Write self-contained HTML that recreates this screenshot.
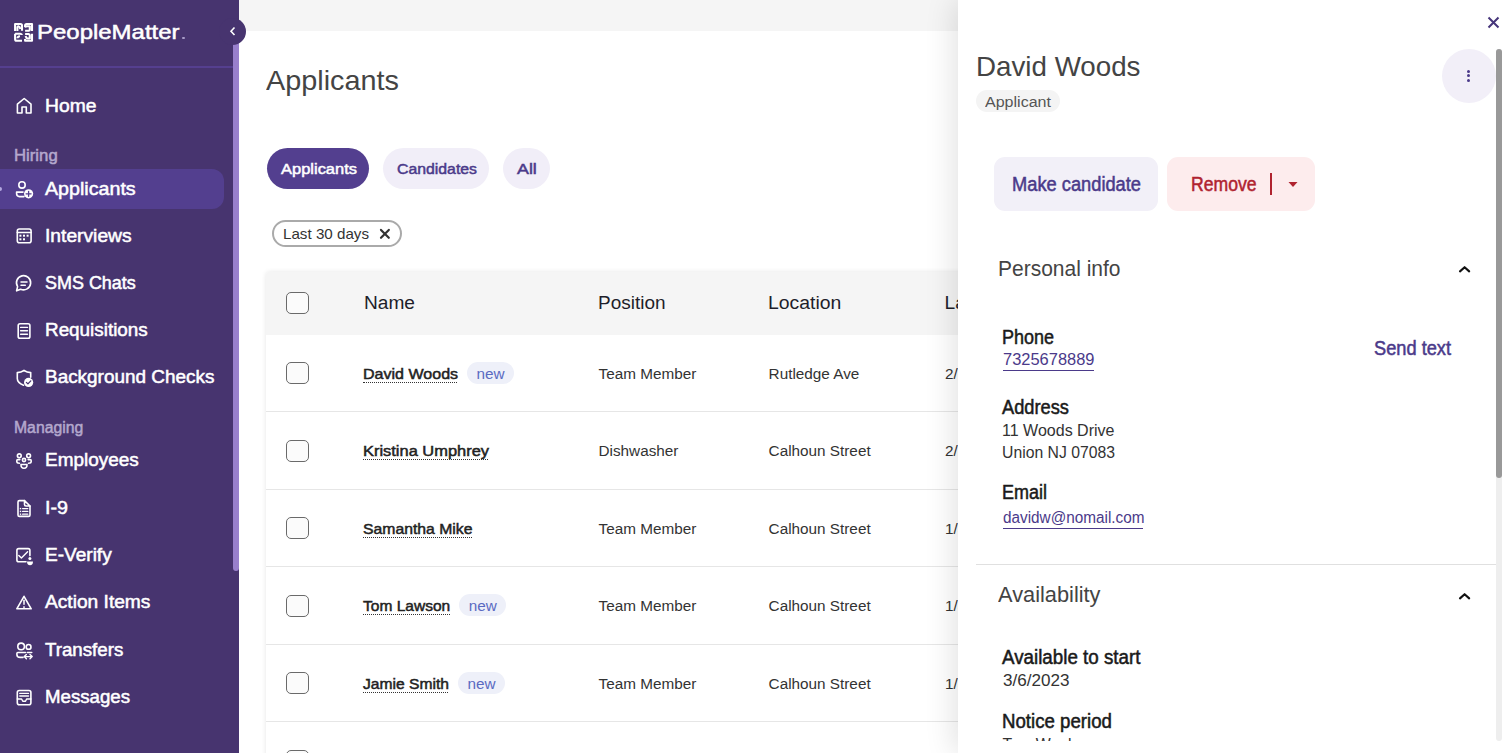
<!DOCTYPE html>
<html><head><meta charset="utf-8">
<style>
*{box-sizing:border-box;margin:0;padding:0}
html,body{width:1510px;height:753px;overflow:hidden;background:#fff;font-family:"Liberation Sans",sans-serif;position:relative}
.a{position:absolute;white-space:nowrap;line-height:1}
.md{-webkit-text-stroke:0.5px currentColor}
svg{position:absolute;left:0;top:0;overflow:visible}
</style></head><body>
<div style="position:absolute;left:239px;top:0px;width:719px;height:31px;background:#f5f5f5;"></div>
<div class="a" style="left:265.5px;top:66.80px;font-size:28px;font-weight:400;color:#444;transform:scaleX(1.0295);transform-origin:0 23.70px;">Applicants</div>
<div style="position:absolute;left:267px;top:148px;width:102px;height:41px;background:#533f8f;border-radius:21px"></div>
<div class="a md" style="left:281px;top:161.25px;font-size:15.3px;font-weight:400;color:#fff;transform:scaleX(1.0768);transform-origin:0 12.95px;">Applicants</div>
<div style="position:absolute;left:383px;top:148px;width:106px;height:41px;background:#f1eef8;border-radius:21px"></div>
<div class="a md" style="left:396.5px;top:161.25px;font-size:15.3px;font-weight:400;color:#4b3a8a;transform:scaleX(1.0337);transform-origin:0 12.95px;">Candidates</div>
<div style="position:absolute;left:503px;top:148px;width:47px;height:41px;background:#f1eef8;border-radius:21px"></div>
<div class="a md" style="left:516.5px;top:161.25px;font-size:15.3px;font-weight:400;color:#4b3a8a;transform:scaleX(1.1647);transform-origin:0 12.95px;">All</div>
<div style="position:absolute;left:272px;top:220px;width:129.5px;height:26.7px;background:#fff;border:2px solid #aaa;border-radius:14px"></div>
<div class="a" style="left:283px;top:226.77px;font-size:14.8px;font-weight:400;color:#333;transform:scaleX(1.0250);transform-origin:0 12.53px;">Last 30 days</div>
<svg width="1510" height="753"><path d="M381,229.9 L388.8,237.8 M388.8,229.9 L381,237.8" stroke="#333" stroke-width="2.2" stroke-linecap="round"/></svg>
<div style="position:absolute;left:266px;top:272px;width:800px;height:500px;background:#fff;box-shadow:0 0 5px rgba(0,0,0,0.10);border-radius:3px 0 0 0"></div>
<div style="position:absolute;left:266px;top:272px;width:800px;height:62.5px;background:#f5f5f5;border-radius:3px 0 0 0"></div>
<div style="position:absolute;left:286.3px;top:292px;width:22.6px;height:22px;background:#fbfbfb;border:1.6px solid #6a6a6a;border-radius:5px"></div>
<div class="a" style="left:363.5px;top:293.25px;font-size:19.2px;font-weight:400;color:#1e1e2a;transform:scaleX(0.9963);transform-origin:0 16.25px;">Name</div>
<div class="a" style="left:598px;top:293.25px;font-size:19.2px;font-weight:400;color:#1e1e2a;transform:scaleX(0.9888);transform-origin:0 16.25px;">Position</div>
<div class="a" style="left:768px;top:293.25px;font-size:19.2px;font-weight:400;color:#1e1e2a;transform:scaleX(1.0104);transform-origin:0 16.25px;">Location</div>
<div class="a" style="left:944.5px;top:293.25px;font-size:19.2px;font-weight:400;color:#1e1e2a;">Last activity</div>
<div style="position:absolute;left:286.3px;top:362px;width:22.6px;height:22px;background:#fbfbfb;border:1.6px solid #6a6a6a;border-radius:5px"></div>
<div class="a md" style="left:363.4px;top:365.85px;font-size:15.3px;font-weight:400;color:#222;transform:scaleX(1.0485);transform-origin:0 12.95px;">David Woods</div>
<div style="position:absolute;left:363.4px;top:381.8px;width:94.1px;height:1px;background:transparent;border-top:1px dotted #333"></div>
<div style="position:absolute;left:467.0px;top:361.8px;width:47px;height:22px;background:#eef0f9;border-radius:11px"></div>
<div class="a" style="left:476.6px;top:365.85px;font-size:15.3px;font-weight:400;color:#5a6ac2;">new</div>
<div class="a" style="left:598.5px;top:365.85px;font-size:15.3px;font-weight:400;color:#333;">Team Member</div>
<div class="a" style="left:768.6px;top:365.85px;font-size:15.3px;font-weight:400;color:#333;">Rutledge Ave</div>
<div class="a" style="left:945px;top:365.85px;font-size:15.3px;font-weight:400;color:#333;">2/28/2023</div>
<div style="position:absolute;left:266px;top:411px;width:800px;height:1px;background:#e6e6e6;"></div>
<div style="position:absolute;left:286.3px;top:440px;width:22.6px;height:22px;background:#fbfbfb;border:1.6px solid #6a6a6a;border-radius:5px"></div>
<div class="a md" style="left:363.4px;top:443.30px;font-size:15.3px;font-weight:400;color:#222;transform:scaleX(1.0741);transform-origin:0 12.95px;">Kristina Umphrey</div>
<div style="position:absolute;left:363.4px;top:459.25px;width:125px;height:1px;background:transparent;border-top:1px dotted #333"></div>
<div class="a" style="left:598.5px;top:443.30px;font-size:15.3px;font-weight:400;color:#333;">Dishwasher</div>
<div class="a" style="left:768.6px;top:443.30px;font-size:15.3px;font-weight:400;color:#333;">Calhoun Street</div>
<div class="a" style="left:945px;top:443.30px;font-size:15.3px;font-weight:400;color:#333;">2/27/2023</div>
<div style="position:absolute;left:266px;top:489px;width:800px;height:1px;background:#e6e6e6;"></div>
<div style="position:absolute;left:286.3px;top:517px;width:22.6px;height:22px;background:#fbfbfb;border:1.6px solid #6a6a6a;border-radius:5px"></div>
<div class="a md" style="left:363.4px;top:520.75px;font-size:15.3px;font-weight:400;color:#222;transform:scaleX(1.0303);transform-origin:0 12.95px;">Samantha Mike</div>
<div style="position:absolute;left:363.4px;top:536.7px;width:108.5px;height:1px;background:transparent;border-top:1px dotted #333"></div>
<div class="a" style="left:598.5px;top:520.75px;font-size:15.3px;font-weight:400;color:#333;">Team Member</div>
<div class="a" style="left:768.6px;top:520.75px;font-size:15.3px;font-weight:400;color:#333;">Calhoun Street</div>
<div class="a" style="left:945px;top:520.75px;font-size:15.3px;font-weight:400;color:#333;">1/30/2023</div>
<div style="position:absolute;left:266px;top:566px;width:800px;height:1px;background:#e6e6e6;"></div>
<div style="position:absolute;left:286.3px;top:595px;width:22.6px;height:22px;background:#fbfbfb;border:1.6px solid #6a6a6a;border-radius:5px"></div>
<div class="a md" style="left:363.4px;top:598.20px;font-size:15.3px;font-weight:400;color:#222;transform:scaleX(1.0154);transform-origin:0 12.95px;">Tom Lawson</div>
<div style="position:absolute;left:363.4px;top:614.1500000000001px;width:86.2px;height:1px;background:transparent;border-top:1px dotted #333"></div>
<div style="position:absolute;left:459.09999999999997px;top:594.1500000000001px;width:47px;height:22px;background:#eef0f9;border-radius:11px"></div>
<div class="a" style="left:468.7px;top:598.20px;font-size:15.3px;font-weight:400;color:#5a6ac2;">new</div>
<div class="a" style="left:598.5px;top:598.20px;font-size:15.3px;font-weight:400;color:#333;">Team Member</div>
<div class="a" style="left:768.6px;top:598.20px;font-size:15.3px;font-weight:400;color:#333;">Calhoun Street</div>
<div class="a" style="left:945px;top:598.20px;font-size:15.3px;font-weight:400;color:#333;">1/30/2023</div>
<div style="position:absolute;left:266px;top:644px;width:800px;height:1px;background:#e6e6e6;"></div>
<div style="position:absolute;left:286.3px;top:672px;width:22.6px;height:22px;background:#fbfbfb;border:1.6px solid #6a6a6a;border-radius:5px"></div>
<div class="a md" style="left:363.4px;top:675.65px;font-size:15.3px;font-weight:400;color:#222;transform:scaleX(1.0219);transform-origin:0 12.95px;">Jamie Smith</div>
<div style="position:absolute;left:363.4px;top:691.6px;width:85px;height:1px;background:transparent;border-top:1px dotted #333"></div>
<div style="position:absolute;left:457.9px;top:671.6px;width:47px;height:22px;background:#eef0f9;border-radius:11px"></div>
<div class="a" style="left:467.5px;top:675.65px;font-size:15.3px;font-weight:400;color:#5a6ac2;">new</div>
<div class="a" style="left:598.5px;top:675.65px;font-size:15.3px;font-weight:400;color:#333;">Team Member</div>
<div class="a" style="left:768.6px;top:675.65px;font-size:15.3px;font-weight:400;color:#333;">Calhoun Street</div>
<div class="a" style="left:945px;top:675.65px;font-size:15.3px;font-weight:400;color:#333;">1/30/2023</div>
<div style="position:absolute;left:266px;top:721px;width:800px;height:1px;background:#e6e6e6;"></div>
<div style="position:absolute;left:286.3px;top:750px;width:22.6px;height:22px;background:#fbfbfb;border:1.6px solid #6a6a6a;border-radius:5px"></div>
<div class="a md" style="left:363.4px;top:753.10px;font-size:15.3px;font-weight:400;color:#222;transform:scaleX(1.1115);transform-origin:0 12.95px;">Alex Brown</div>
<div style="position:absolute;left:363.4px;top:769.0500000000001px;width:85px;height:1px;background:transparent;border-top:1px dotted #333"></div>
<div class="a" style="left:598.5px;top:753.10px;font-size:15.3px;font-weight:400;color:#333;">Team Member</div>
<div class="a" style="left:768.6px;top:753.10px;font-size:15.3px;font-weight:400;color:#333;">Calhoun Street</div>
<div class="a" style="left:945px;top:753.10px;font-size:15.3px;font-weight:400;color:#333;">1/30/2023</div>
<div style="position:absolute;left:0px;top:0px;width:239px;height:753px;background:#47346f;"></div>
<div style="position:absolute;left:0px;top:66px;width:233px;height:2px;background:#553f8f;"></div>
<div style="position:absolute;left:233px;top:30px;width:6px;height:541px;background:#9980cc;border-radius:0 0 3px 3px"></div>
<div style="position:absolute;left:0px;top:169px;width:224px;height:40px;background:#533f8f;border-radius:0 12px 12px 0"></div>
<div class="a md" style="left:36.6px;top:21.42px;font-size:21px;font-weight:400;color:#fff;transform:scaleX(1.1409);transform-origin:0 17.78px;">PeopleMatter</div>
<div style="position:absolute;left:182.2px;top:36.6px;width:2.8px;height:2.8px;background:#a89cc8;border-radius:50%"></div>
<div class="a md" style="left:45.3px;top:96.56px;font-size:18px;font-weight:400;color:#fff;transform:scaleX(1.0705);transform-origin:0 15.24px;">Home</div>
<div class="a md" style="left:45.3px;top:179.56px;font-size:18px;font-weight:400;color:#fff;transform:scaleX(1.0919);transform-origin:0 15.24px;">Applicants</div>
<div class="a md" style="left:45.3px;top:226.56px;font-size:18px;font-weight:400;color:#fff;transform:scaleX(1.0687);transform-origin:0 15.24px;">Interviews</div>
<div class="a md" style="left:45.3px;top:273.76px;font-size:18px;font-weight:400;color:#fff;transform:scaleX(0.9975);transform-origin:0 15.24px;">SMS Chats</div>
<div class="a md" style="left:45.3px;top:321.26px;font-size:18px;font-weight:400;color:#fff;transform:scaleX(1.0483);transform-origin:0 15.24px;">Requisitions</div>
<div class="a md" style="left:45.3px;top:368.46px;font-size:18px;font-weight:400;color:#fff;transform:scaleX(1.0516);transform-origin:0 15.24px;">Background Checks</div>
<div class="a md" style="left:45.3px;top:451.26px;font-size:18px;font-weight:400;color:#fff;transform:scaleX(1.0523);transform-origin:0 15.24px;">Employees</div>
<div class="a md" style="left:45.3px;top:498.76px;font-size:18px;font-weight:400;color:#fff;transform:scaleX(1.0944);transform-origin:0 15.24px;">I-9</div>
<div class="a md" style="left:45.3px;top:546.06px;font-size:18px;font-weight:400;color:#fff;transform:scaleX(1.0582);transform-origin:0 15.24px;">E-Verify</div>
<div class="a md" style="left:45.3px;top:593.36px;font-size:18px;font-weight:400;color:#fff;transform:scaleX(1.0641);transform-origin:0 15.24px;">Action Items</div>
<div class="a md" style="left:45.3px;top:640.66px;font-size:18px;font-weight:400;color:#fff;transform:scaleX(1.0390);transform-origin:0 15.24px;">Transfers</div>
<div class="a md" style="left:45.3px;top:687.96px;font-size:18px;font-weight:400;color:#fff;transform:scaleX(1.0360);transform-origin:0 15.24px;">Messages</div>
<div class="a md" style="left:14.4px;top:147.83px;font-size:15.8px;font-weight:400;color:#b4a8cd;transform:scaleX(1.0590);transform-origin:0 13.37px;">Hiring</div>
<div class="a md" style="left:14px;top:420.03px;font-size:15.8px;font-weight:400;color:#b4a8cd;transform:scaleX(0.9973);transform-origin:0 13.37px;">Managing</div>
<svg width="1510" height="753" fill="none" stroke="#fff" stroke-width="1.6" stroke-linejoin="round" stroke-linecap="round">
<g stroke-width="2.1" stroke-linecap="butt" stroke-linejoin="round">
<path d="M15.1,31 V24 H20.5 Q22,24 22,25.5 V30.8"/>
<path d="M32,31 V24 H26.6 Q25.1,24 25.1,25.5 V27"/>
<path d="M15.1,33.8 V39.3 Q15.1,40.8 16.6,40.8 H22"/>
<path d="M32,33.8 V40.8 H25.1 V39"/>
<path d="M17.4,31 V27.3 Q17.4,26.2 18.5,26.2 Q20,26.5 20.3,29"/>
<path d="M25.1,30.7 H28.8 Q29.8,30.7 29.8,29.5 V26.3 H26.6 Q25.6,26.3 25.1,27.5"/>
<path d="M15.1,33.8 H20.2 Q21.8,34 21.9,35 M17.5,38.3 Q17.5,36.5 20,36.3"/>
<path d="M25.1,34 H28.6 Q29.8,34.1 29.8,35.5 V38.5 H27.6 Q26.2,38.3 25.6,36"/>
</g>
<path d="M17.4,113 V104.2 L24.2,98.5 L31,104.2 V113 H26.3 V107 H22 V113 Z"/>
<circle cx="22" cy="184.9" r="3.2"/>
<path d="M24,196.6 H19.5 Q16.6,196.6 16.6,193.6 V192.1 H23"/>
<circle cx="28.6" cy="193.8" r="4.6" fill="#fff" stroke="none"/>
<path d="M28.6,191.3 V196.3 M26.1,193.8 H31.1" stroke="#533f8f" stroke-width="1.3"/>
<rect x="17.3" y="229" width="13.8" height="13.8" rx="2"/>
<path d="M17.3,232.5 H31.1"/>
<g fill="#fff" stroke="none">
<rect x="19.4" y="234.7" width="2" height="2"/><rect x="23" y="234.7" width="2" height="2"/><rect x="26.6" y="234.7" width="2" height="2"/>
<rect x="19.4" y="238.3" width="2" height="2"/><rect x="23" y="238.3" width="2" height="2"/>
</g>
<path d="M17.6,286.6 A7.1,7.1 0 1 1 20.6,289.2 L16.6,290.8 Z"/>
<path d="M21,282 H27 M21,285.3 H25.3" stroke-width="1.5"/>
<rect x="18.2" y="323.7" width="11.7" height="14.6" rx="1.8"/>
<path d="M20.6,327.4 H27.5 M20.6,330.8 H27.5 M20.6,334.2 H27.5" stroke-width="1.4"/>
<path d="M24,370.5 Q21,372.4 17.3,372.6 V378.5 Q17.3,382.8 23.5,385.2"/>
<path d="M24,370.5 Q27,372.4 30.7,372.6 V377.3"/>
<circle cx="28.6" cy="382.4" r="4.6" fill="#fff" stroke="none"/>
<path d="M26.4,382.4 L27.9,383.9 L30.8,380.9" stroke="#47346f" stroke-width="1.3"/>
<circle cx="19.3" cy="455.8" r="1.9"/>
<circle cx="28.6" cy="455.8" r="1.9"/>
<circle cx="24" cy="460" r="1.6"/>
<path d="M19.8,459.6 H17.8 Q16.8,459.6 16.8,460.8 V461.5 Q16.8,463.2 19.5,463.2"/>
<path d="M28.2,459.6 H30.2 Q31.2,459.6 31.2,460.8 V461.5 Q31.2,463.2 28.5,463.2"/>
<path d="M21,464.5 H27 Q27.2,468.3 24,468.3 Q20.8,468.3 21,464.5 Z"/>
<path d="M24.5,500.6 H19.4 Q18,500.6 18,502 V515 Q18,516.4 19.4,516.4 H28.6 Q30,516.4 30,515 V506"/>
<path d="M24.5,500.6 L30,506 H26 Q24.5,506 24.5,504.5 Z"/>
<path d="M22.6,508.6 H27.8 M22.6,511.4 H27.8 M22.6,514.2 H27.8" stroke-width="1.3"/>
<g fill="#fff" stroke="none"><rect x="19.8" y="507.9" width="1.4" height="1.4"/><rect x="19.8" y="510.7" width="1.4" height="1.4"/><rect x="19.8" y="513.5" width="1.4" height="1.4"/></g>
<path d="M29.9,555.6 V550.4 Q29.9,548.6 28.1,548.6 H18.7 Q16.9,548.6 16.9,550.4 V560 Q16.9,561.8 18.7,561.8 H26"/>
<path d="M18.8,555.4 L21.4,558.1 L27.6,551.8" stroke-width="1.4"/>
<circle cx="29.9" cy="558.5" r="1.5" fill="#fff" stroke="none"/>
<path d="M27,561.4 H33 Q33,565.2 30,565.2 Q27,565.2 27,561.4 Z" fill="#fff" stroke="none"/>
<path d="M24,596.3 L31.2,608.8 H16.8 Z"/>
<path d="M24,600.3 V604.3" stroke-width="1.5"/>
<rect x="23.2" y="606.3" width="1.6" height="1.6" fill="#fff" stroke="none"/>
<circle cx="21.1" cy="646.4" r="3.3"/>
<circle cx="28.6" cy="646.9" r="2.4"/>
<path d="M25.5,652.5 H17.8 Q16.9,652.5 16.9,653.6 V654.4 Q16.9,657.4 20.2,657.4 H23"/>
<path d="M27.4,652.5 H31.7" />
<path d="M24.2,656.6 H32.2 M26.4,654.5 L24.2,656.6 L26.4,658.7 M30,654.5 L32.2,656.6 L30,658.7" stroke-width="1.4"/>
<rect x="17.3" y="690.5" width="13.6" height="14.2" rx="2"/>
<path d="M19.8,693.4 H28.5 M19.8,696 H28.5" stroke-width="1.4"/>
<path d="M17.3,699 H21.6 L22.8,701.3 H25.5 L26.6,699 H30.9" stroke-width="1.4"/>
<circle cx="0" cy="189" r="2" fill="#b4a8e0" stroke="none"/>
</svg>
<div style="position:absolute;left:219px;top:18.4px;width:27px;height:27px;background:#47346f;border-radius:50%"></div>
<svg width="1510" height="753"><path d="M234.5,27.5 L231,31.2 L234.5,35" fill="none" stroke="#fff" stroke-width="1.6"/></svg>
<div style="position:absolute;left:958px;top:0px;width:552px;height:753px;background:#fff;box-shadow:-4px 0 28px rgba(0,0,0,0.12)"></div>
<svg width="1510" height="753"><path d="M1488.5,17.5 L1498.5,27.5 M1498.5,17.5 L1488.5,27.5" stroke="#46357a" stroke-width="2"/></svg>
<div class="a" style="left:975.5px;top:52.72px;font-size:27.5px;font-weight:400;color:#444;transform:scaleX(1.0089);transform-origin:0 23.28px;">David Woods</div>
<div style="position:absolute;left:976px;top:90px;width:84px;height:22px;background:#f4f4f4;border-radius:11px"></div>
<div class="a" style="left:984.5px;top:93.78px;font-size:15.5px;font-weight:400;color:#555;transform:scaleX(1.0350);transform-origin:0 13.12px;">Applicant</div>
<div style="position:absolute;left:1442px;top:49px;width:54px;height:54px;background:#f2eff8;border-radius:50%"></div>
<div style="position:absolute;left:1467.3px;top:69.5px;width:3px;height:3px;background:#4b3a8a;border-radius:50%"></div>
<div style="position:absolute;left:1467.3px;top:74.2px;width:3px;height:3px;background:#4b3a8a;border-radius:50%"></div>
<div style="position:absolute;left:1467.3px;top:78.8px;width:3px;height:3px;background:#4b3a8a;border-radius:50%"></div>
<div style="position:absolute;left:1496px;top:49px;width:6px;height:692px;background:#eeeeee;border-radius:3px"></div>
<div style="position:absolute;left:1496px;top:49px;width:6px;height:429px;background:#999999;border-radius:3px"></div>
<div style="position:absolute;left:994px;top:157px;width:164px;height:54px;background:#f2f0f8;border-radius:11px"></div>
<div class="a md" style="left:1011.7px;top:175.09px;font-size:19.5px;font-weight:400;color:#4b3a8a;transform:scaleX(0.9370);transform-origin:0 16.51px;">Make candidate</div>
<div style="position:absolute;left:1167px;top:157px;width:148px;height:54px;background:#fdeced;border-radius:11px"></div>
<div class="a md" style="left:1191px;top:175.09px;font-size:19.5px;font-weight:400;color:#b0232f;transform:scaleX(0.9019);transform-origin:0 16.51px;">Remove</div>
<div style="position:absolute;left:1270px;top:173px;width:2px;height:21.5px;background:#b0232f;"></div>
<svg width="1510" height="753"><path d="M1288.5,182 L1297.5,182 L1293,187 Z" fill="#b0232f"/></svg>
<div class="a" style="left:998.3px;top:258.80px;font-size:21.5px;font-weight:400;color:#444;transform:scaleX(0.9761);transform-origin:0 18.20px;">Personal info</div>
<svg width="1510" height="753"><path d="M1460,271.4 L1464.6,267.2 L1469.2,271.4" fill="none" stroke="#111" stroke-width="2.1" stroke-linecap="round" stroke-linejoin="round"/></svg>
<div class="a md" style="left:1002px;top:327.89px;font-size:19.5px;font-weight:400;color:#1a1a1a;transform:scaleX(0.9221);transform-origin:0 16.51px;">Phone</div>
<div class="a" style="left:1002.5px;top:351.63px;font-size:15.8px;font-weight:400;color:#4b3a8a;transform:scaleX(1.0414);transform-origin:0 13.37px;">7325678889</div>
<div style="position:absolute;left:1003px;top:370px;width:91px;height:1.2px;background:#4b3a8a;"></div>
<div class="a md" style="left:1374.3px;top:338.89px;font-size:19.5px;font-weight:400;color:#4b3a8a;transform:scaleX(0.9346);transform-origin:0 16.51px;">Send text</div>
<div class="a md" style="left:1002px;top:397.89px;font-size:19.5px;font-weight:400;color:#1a1a1a;transform:scaleX(0.9364);transform-origin:0 16.51px;">Address</div>
<div class="a" style="left:1002.3px;top:422.53px;font-size:15.8px;font-weight:400;color:#333;transform:scaleX(1.0142);transform-origin:0 13.37px;">11 Woods Drive</div>
<div class="a" style="left:1002px;top:444.83px;font-size:15.8px;font-weight:400;color:#333;transform:scaleX(0.9974);transform-origin:0 13.37px;">Union NJ 07083</div>
<div class="a md" style="left:1002px;top:483.49px;font-size:19.5px;font-weight:400;color:#1a1a1a;transform:scaleX(0.9228);transform-origin:0 16.51px;">Email</div>
<div class="a" style="left:1002.5px;top:509.63px;font-size:15.8px;font-weight:400;color:#4b3a8a;transform:scaleX(0.9693);transform-origin:0 13.37px;">davidw@nomail.com</div>
<div style="position:absolute;left:1003px;top:527.6px;width:140.4px;height:1.2px;background:#4b3a8a;"></div>
<div style="position:absolute;left:976px;top:564px;width:520px;height:1px;background:#e0e0e0;"></div>
<div class="a" style="left:997.8px;top:585.00px;font-size:21.5px;font-weight:400;color:#444;transform:scaleX(1.0130);transform-origin:0 18.20px;">Availability</div>
<svg width="1510" height="753"><path d="M1460,598.4000000000001 L1464.6,594.2 L1469.2,598.4000000000001" fill="none" stroke="#111" stroke-width="2.1" stroke-linecap="round" stroke-linejoin="round"/></svg>
<div class="a md" style="left:1002px;top:648.09px;font-size:19.5px;font-weight:400;color:#1a1a1a;transform:scaleX(0.9631);transform-origin:0 16.51px;">Available to start</div>
<div class="a" style="left:1002.5px;top:673.23px;font-size:15.8px;font-weight:400;color:#333;transform:scaleX(1.0813);transform-origin:0 13.37px;">3/6/2023</div>
<div class="a md" style="left:1002px;top:711.69px;font-size:19.5px;font-weight:400;color:#1a1a1a;transform:scaleX(0.9573);transform-origin:0 16.51px;">Notice period</div>
<div style="position:absolute;left:958px;top:700px;width:530px;height:41px;overflow:hidden"><div class="a" style="left:44.5px;top:37.23px;font-size:15.8px;font-weight:400;color:#333;">Two Weeks</div>
</div>
</body></html>
